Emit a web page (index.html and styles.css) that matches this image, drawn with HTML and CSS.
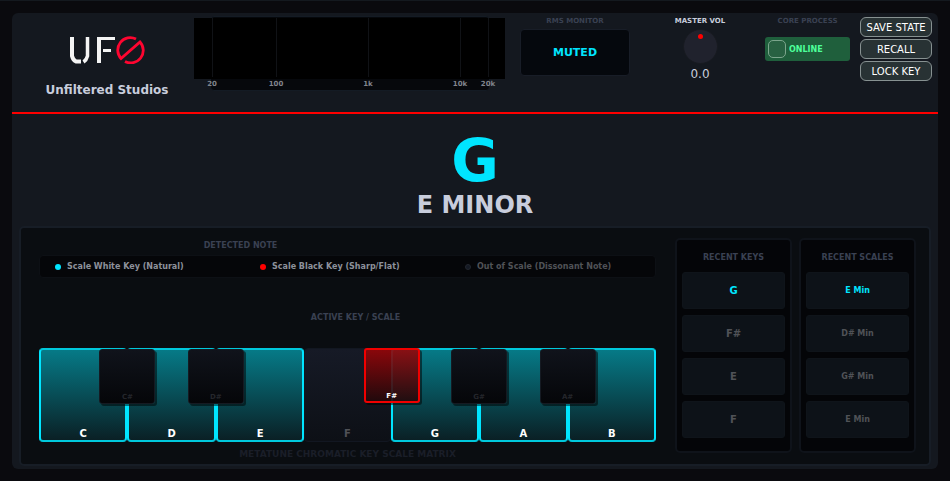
FILE: index.html
```html
<!DOCTYPE html>
<html lang="en">
<head>
    <meta charset="UTF-8">
    <meta name="viewport" content="width=device-width, initial-scale=1.0">
    <title>MetaTune</title>
    <link rel="stylesheet" href="styles.css">
</head>
<body>
    <main class="plugin">
        <header class="top-bar">
            <div class="brand">
                <svg class="logo" width="78" height="30" viewBox="0 0 78 30" fill="none" role="img" aria-label="UFO">
                    <path d="M4 3v19q1 4 4 5.500h5" stroke="#f4f4f4" stroke-width="4"/>
                    <path d="M19.500 3v19q-1 4-4 6" stroke="#f4f4f4" stroke-width="3.500"/>
                    <path d="M29 4.500h18M35 16.500h8" stroke="#f4f4f4" stroke-width="3"/>
                    <path d="M31 3v26" stroke="#f4f4f4" stroke-width="4"/>
                    <path d="M68 5A12.500 12.500 0 0 0 53 24.500L72 8A12.500 12.500 0 0 1 57 27.500" stroke="#ff0530" stroke-width="2.800"/>
                </svg>
                <div class="brand-name">Unfiltered Studios</div>
            </div>

            <div class="analyzer">
                <div class="analyzer-back"></div>
                <svg class="screen" preserveAspectRatio="none" viewBox="0 0 311 61">
                    <path d="M18.500 0v59M82.500 0v59M174.500 0v59M266.500 0v59M294.500 0v59" stroke="#101216"/>
                </svg>
                <div class="freqs">
                    <span>20</span>
                    <span>100</span>
                    <span>1k</span>
                    <span>10k</span>
                    <span>20k</span>
                </div>
            </div>

            <div class="rms">
                <div class="label">RMS MONITOR</div>
                <div class="rms-box">MUTED</div>
            </div>

            <div class="volume">
                <label class="label bright" for="master-vol">MASTER VOL</label>
                <input type="range" id="master-vol" class="knob" min="-12" max="12" step="0.1" value="0">
                <output id="vol-value" for="master-vol">0.0</output>
            </div>

            <div class="core">
                <div class="label">CORE PROCESS</div>
                <label class="online"><input type="checkbox" id="core-process">ONLINE</label>
            </div>

            <div class="actions">
                <button type="button">SAVE STATE</button>
                <button type="button">RECALL</button>
                <button type="button">LOCK KEY</button>
            </div>
        </header>

        <section class="result">
            <div class="note">G</div>
            <h1>E MINOR</h1>
        </section>

        <section class="deck">
            <div class="matrix">
                <div class="caption detected">DETECTED NOTE</div>
                <div class="legend">
                    <div class="legend-item"><i class="dot natural"></i>Scale White Key (Natural)</div>
                    <div class="legend-item"><i class="dot sharp"></i>Scale Black Key (Sharp/Flat)</div>
                    <div class="legend-item muted"><i class="dot out"></i>Out of Scale (Dissonant Note)</div>
                </div>
                <div class="caption active-scale">ACTIVE KEY / SCALE</div>
                <div class="piano">
                    <div class="key on">C<div class="black-key">C#</div></div>
                    <div class="key on">D<div class="black-key">D#</div></div>
                    <div class="key on">E</div>
                    <div class="key">F<div class="black-key on">F#</div></div>
                    <div class="key on">G<div class="black-key">G#</div></div>
                    <div class="key on">A<div class="black-key">A#</div></div>
                    <div class="key on">B</div>
                </div>
                <div class="matrix-title">METATUNE CHROMATIC KEY SCALE MATRIX</div>
            </div>

            <div class="history keys">
                <h2 class="caption">RECENT KEYS</h2>
                <div class="slot latest">G</div>
                <div class="slot">F#</div>
                <div class="slot">E</div>
                <div class="slot">F</div>
            </div>

            <div class="history scales">
                <h2 class="caption">RECENT SCALES</h2>
                <div class="slot latest">E Min</div>
                <div class="slot">D# Min</div>
                <div class="slot">G# Min</div>
                <div class="slot">E Min</div>
            </div>
        </section>
    </main>

    <script>
        const vol = document.getElementById('master-vol');

        vol.addEventListener('input', function () {
            document.getElementById('vol-value').textContent = Number(vol.value).toFixed(1);
        });
    </script>
</body>
</html>
```
FILE: styles.css
```css
* {
    box-sizing: border-box;
}
body {
    margin: 0;
    padding: 12px;
    border-top: 1px solid #14191f;
    background-color: #0a0a0e;
    font-family: Verdana, "DejaVu Sans", sans-serif;
    font-weight: bold;
    color: #c8cddc;
}
.plugin {
    padding-bottom: 3px;
    border-radius: 6px;
    background-color: #14181f;
}

/* top bar */
.top-bar {
    display: flex;
    height: 101px;
    padding: 4px 6px 0 0;
    border-bottom: 2px solid #ff0000;
}
.label {
    height: 8px;
    font-size: 7px;
    line-height: 9px;
    white-space: nowrap;
    color: #3a4152;
}
.bright {
    color: #c8cddc;
}
.brand {
    width: 182px;
    padding: 17px 0 0 8px;
    text-align: center;
}
.logo {
    display: block;
    margin: 0 auto;
}
.brand-name {
    margin-top: 18px;
    font-size: 12px;
    line-height: 16px;
}
.analyzer {
    position: relative;
    flex: 1;
    margin: 1px 15px 0 0;
}
.analyzer-back {
    position: absolute;
    top: -2px;
    left: 16px;
    right: 15px;
    height: 75px;
    border: 1px solid #141b24;
    border-radius: 4px;
    background-color: #06080c;
}
.screen {
    position: relative;
    display: block;
    width: 100%;
    height: 61px;
    background-color: #000;
}
/* each column ends at its grid line, the label is centred on that edge */
.freqs {
    position: relative;
    display: grid;
    grid-template-columns: 18fr 64fr 92fr 92fr 28fr 17fr;
    font-size: 7px;
    line-height: 11px;
    color: #80848c;
}
.freqs span {
    display: flex;
    justify-content: center;
    justify-self: end;
    width: 0;
}
.rms {
    width: 110px;
    text-align: center;
}
.rms-box {
    height: 47px;
    margin-top: 4px;
    border: 1px solid #181d27;
    border-radius: 4px;
    background-color: #05080d;
    font-size: 11px;
    line-height: 45px;
    color: #00e5ff;
}
.volume {
    display: flex;
    flex-direction: column;
    align-items: center;
    width: 120px;
    margin: 0 5px 0 10px;
}
.knob {
    appearance: none;
    width: 35px;
    height: 35px;
    margin: 4px 0 0;
    border: 1px solid #171a20;
    border-radius: 50%;
    background-color: #20222d;
}
.knob::-webkit-slider-runnable-track {
    height: 25px;
}
.knob::-webkit-slider-thumb {
    appearance: none;
    width: 5px;
    height: 5px;
    border-radius: 50%;
    background-color: #ff0000;
}
.volume output {
    margin-top: 2px;
    font-size: 12px;
    line-height: 16px;
    font-weight: normal;
}
.core {
    width: 85px;
    text-align: center;
}
.online {
    display: flex;
    align-items: center;
    height: 24px;
    margin-top: 12px;
    padding-left: 3px;
    border-radius: 3px;
    background-color: #1f5f3c;
    font-size: 8px;
    color: #4dff9a;
}
.online input {
    appearance: none;
    width: 18px;
    height: 18px;
    margin: 0 3px 0 0;
    border: 1px solid #7ba58c;
    border-radius: 5px;
    background-color: #286142;
}
.online input:checked {
    background-color: #4dff9a;
}
.actions {
    display: flex;
    flex-direction: column;
    gap: 2px;
    width: 72px;
    margin-left: 10px;
}
.actions button {
    height: 20px;
    padding: 0;
    border: 1px solid #879191;
    border-radius: 6px;
    background-color: #283234;
    font-family: inherit;
    font-size: 10px;
    white-space: nowrap;
    color: #fff;
    cursor: pointer;
}
.actions button:hover {
    background-color: #35444a;
}

/* detected key */
.result {
    height: 112px;
    padding-top: 17px;
    text-align: center;
}
.note {
    font-size: 58px;
    line-height: 60px;
    color: #00e5ff;
}
h1 {
    margin: 0;
    font-size: 24px;
    line-height: 28px;
}

/* lower deck */
.deck {
    display: flex;
    align-items: flex-start;
    gap: 7px;
    margin: 0 7px;
    padding: 10px 13px 4px 18px;
    border: 2px solid #171d26;
    border-radius: 5px;
    background-color: #0a0d11;
}
.caption {
    margin: 0;
    font-size: 8px;
    line-height: 10px;
    text-align: center;
    color: #3a4152;
}
.matrix {
    flex: 1;
    margin-right: 12px;
    padding-top: 3px;
}
.detected {
    padding-right: 214px;
}
.legend {
    display: grid;
    grid-template-columns: 1fr 1fr 1fr;
    height: 23px;
    margin-top: 4px;
    border: 1px solid #0d1015;
    border-radius: 4px;
    background-color: #050609;
    font-size: 8px;
    line-height: 21px;
    white-space: nowrap;
    color: #8d919b;
}
.legend-item {
    display: flex;
    align-items: center;
    padding-left: 15px;
}
.legend-item.muted {
    color: #505257;
}
.dot {
    width: 6px;
    height: 6px;
    margin-right: 6px;
    border-radius: 50%;
}
.natural {
    background-color: #00e5ff;
}
.sharp {
    background-color: #ff0000;
}
.out {
    border: 1px solid #22262e;
    background-color: #141924;
}
.active-scale {
    margin-top: 35px;
    padding-left: 16px;
}
.piano {
    display: flex;
    margin-top: 25px;
}
.key {
    position: relative;
    flex: 1;
    height: 94px;
    padding-top: 79px;
    border: 1px solid #121721;
    border-radius: 4px;
    background: linear-gradient(#161a26, #0d1016);
    font-size: 10px;
    line-height: 12px;
    text-align: center;
    color: #505257;
}
.key.on {
    border: 2px solid;
    border-color: #00c8dc #00e5ff;
    padding-top: 78px;
    background: linear-gradient(#067a87, #0a2025);
    color: #fff;
}
.black-key {
    position: absolute;
    z-index: 1;
    top: -1px;
    right: -30px;
    width: 56px;
    height: 55px;
    padding-top: 41px;
    border: 1px solid #151a22;
    border-radius: 3px;
    background: linear-gradient(#10131b, #050609);
    box-shadow: 2px 2px 0 rgba(0, 0, 0, 0.5);
    font-size: 7px;
    color: #24262b;
}
.black-key.on {
    border: 2px solid #f00000;
    padding-top: 40px;
    background: linear-gradient(rgba(150, 5, 8, 0.9), rgba(35, 8, 10, 0.9));
    color: #fff;
}
.matrix-title {
    margin-top: 6px;
    font-size: 9px;
    line-height: 12px;
    text-align: center;
    color: #1a1e28;
}
.history {
    width: 117px;
    height: 215px;
    padding: 12px 5px 0;
    border: 2px solid #0f131a;
    border-radius: 5px;
    background-color: #040508;
}
.history .caption {
    margin-bottom: 9px;
    line-height: 11px;
}
.slot {
    height: 37px;
    margin-bottom: 6px;
    border: 1px solid #0f141a;
    border-radius: 3px;
    background-color: #0d1218;
    line-height: 36px;
    text-align: center;
    color: #505257;
}
.keys .slot {
    font-size: 10px;
}
.scales .slot {
    font-size: 8px;
}
.slot.latest {
    color: #00e5ff;
}
```
